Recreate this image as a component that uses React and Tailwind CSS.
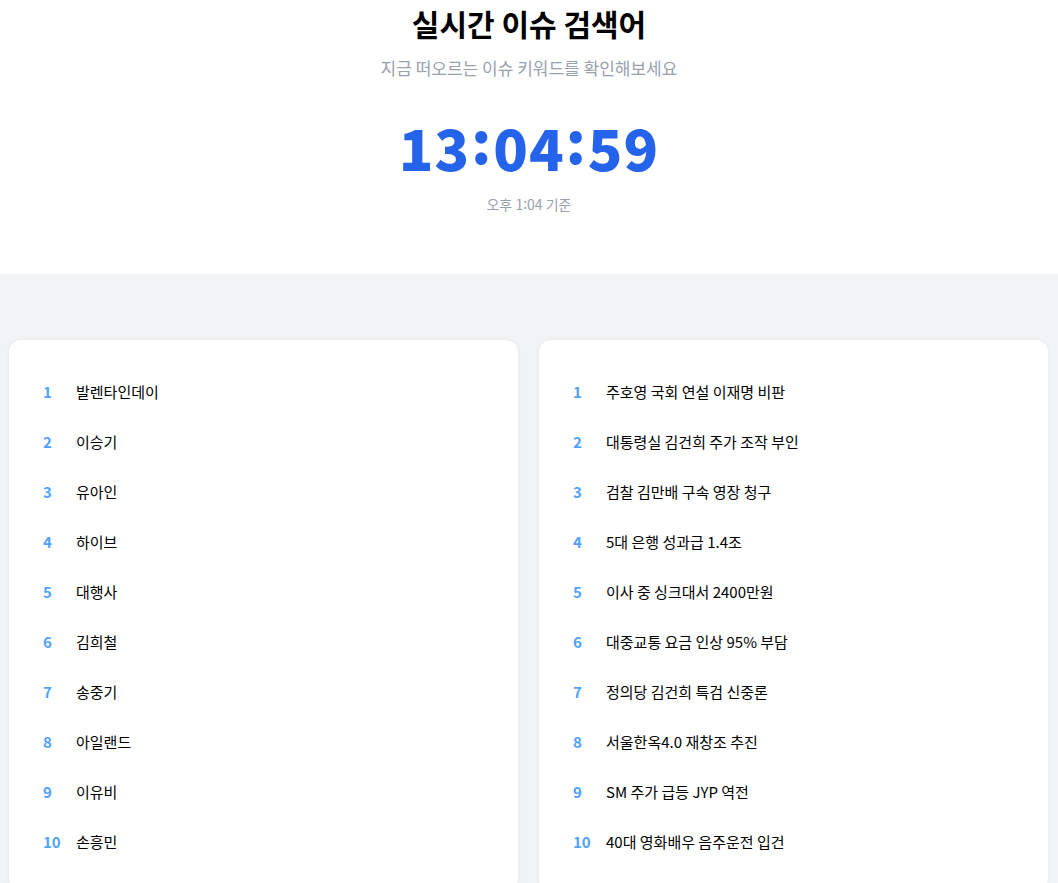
import React from 'react';

const left = ['발렌타인데이', '이승기', '유아인', '하이브', '대행사', '김희철', '송중기', '아일랜드', '이유비', '손흥민'];
const right = [
  '주호영 국회 연설 이재명 비판',
  '대통령실 김건희 주가 조작 부인',
  '검찰 김만배 구속 영장 청구',
  '5대 은행 성과급 1.4조',
  '이사 중 싱크대서 2400만원',
  '대중교통 요금 인상 95% 부담',
  '정의당 김건희 특검 신중론',
  '서울한옥4.0 재창조 추진',
  'SM 주가 급등 JYP 역전',
  '40대 영화배우 음주운전 입건',
];

function RankCard({ items }) {
  return (
    <div className="flex-1 rounded-xl bg-white pt-[27px] pb-6 pl-[34px] pr-6 shadow-[0_0_4px_rgba(0,0,0,0.06)]">
      <ul>
        {items.map((k, i) => (
          <li key={k} className="flex h-[50px] items-center">
            <span className="w-[33px] text-[15px] font-bold text-blue-400">{i + 1}</span>
            <span className="text-[15px] text-black">{k}</span>
          </li>
        ))}
      </ul>
    </div>
  );
}

// colon sits a bit higher than the baseline in the reference
const Colon = ({ shift }) => <span className={`inline-block ${shift}`}>:</span>;

export default function App() {
  return (
    <div className="min-h-screen bg-[#f2f3f5] font-['Noto_Sans_CJK_KR','Noto_Sans',sans-serif]">
      <header className="flex h-[274px] flex-col items-center bg-white">
        <h1 className="mt-[1px] text-[30px] font-bold leading-[44px] text-black">실시간 이슈 검색어</h1>
        <p className="mt-[11px] text-[17px] leading-6 text-gray-400">지금 떠오르는 이슈 키워드를 확인해보세요</p>
        <div className="mt-[32px] text-[57px] font-black leading-[68px] tracking-[1px] text-[#2563eb]">
          13<Colon shift="-translate-y-[7px] mx-[1px]" />04<Colon shift="-translate-y-[7px] mx-[1px]" />59
        </div>
        <p className="mt-[14px] text-[14px] leading-5 text-gray-400">
          오후 1<Colon shift="-translate-y-[1px]" />04 기준
        </p>
      </header>

      <main className="flex gap-[21px] pt-[66px] pl-[9px] pr-[10px] pb-10">
        <RankCard items={left} />
        <RankCard items={right} />
      </main>
    </div>
  );
}
